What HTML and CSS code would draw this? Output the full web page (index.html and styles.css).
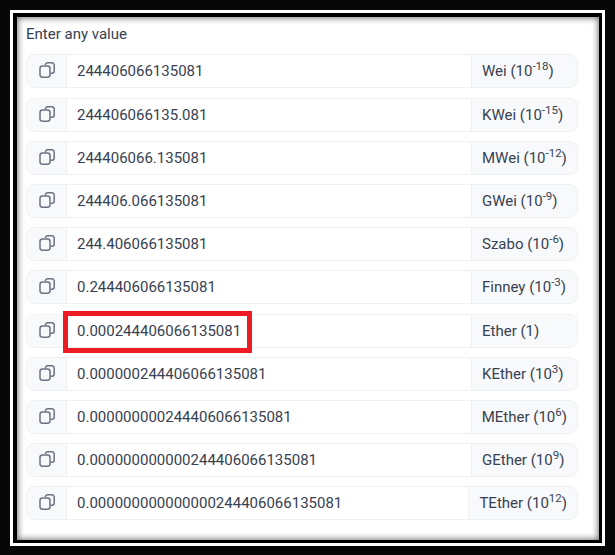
FILE: index.html
```html
<!DOCTYPE html>
<html lang="en">
<head>
<meta charset="utf-8">
<title>Ethereum unit converter</title>
<link rel="stylesheet" href="styles.css">
</head>
<body>
<svg class="defs" width="0" height="0" aria-hidden="true"><symbol id="copy" viewBox="0 0 16 16"><path d="M6.4 3.2V3a2.2 2.2 0 0 1 2.2-2.2h4.4A2.2 2.2 0 0 1 15.200 3v6a2.200 2.200 0 0 1-2.200 2.200h-1.500" fill="none" stroke="currentColor" stroke-width="1.500"/><rect x="1" y="4" width="10" height="11.200" rx="2.400" fill="none" stroke="currentColor" stroke-width="1.500"/></symbol></svg>
<div class="frame"><div class="frame-line"><div class="frame-inner"><main class="panel">
<label class="title">Enter any value</label>
<div class="rows">
<div class="row"><span class="copy"><svg class="icon"><use href="#copy"/></svg></span><span class="value">244406066135081</span><span class="unit">Wei (10<sup>-18</sup>)</span></div>
<div class="row"><span class="copy"><svg class="icon"><use href="#copy"/></svg></span><span class="value">244406066135.081</span><span class="unit">KWei (10<sup>-15</sup>)</span></div>
<div class="row"><span class="copy"><svg class="icon"><use href="#copy"/></svg></span><span class="value">244406066.135081</span><span class="unit">MWei (10<sup>-12</sup>)</span></div>
<div class="row"><span class="copy"><svg class="icon"><use href="#copy"/></svg></span><span class="value">244406.066135081</span><span class="unit">GWei (10<sup>-9</sup>)</span></div>
<div class="row"><span class="copy"><svg class="icon"><use href="#copy"/></svg></span><span class="value">244.406066135081</span><span class="unit">Szabo (10<sup>-6</sup>)</span></div>
<div class="row"><span class="copy"><svg class="icon"><use href="#copy"/></svg></span><span class="value">0.244406066135081</span><span class="unit">Finney (10<sup>-3</sup>)</span></div>
<div class="row"><span class="copy"><svg class="icon"><use href="#copy"/></svg></span><span class="value">0.000244406066135081<i class="mark"></i></span><span class="unit">Ether (1)</span></div>
<div class="row"><span class="copy"><svg class="icon"><use href="#copy"/></svg></span><span class="value">0.000000244406066135081</span><span class="unit">KEther (10<sup>3</sup>)</span></div>
<div class="row"><span class="copy"><svg class="icon"><use href="#copy"/></svg></span><span class="value">0.000000000244406066135081</span><span class="unit">MEther (10<sup>6</sup>)</span></div>
<div class="row"><span class="copy"><svg class="icon"><use href="#copy"/></svg></span><span class="value">0.000000000000244406066135081</span><span class="unit">GEther (10<sup>9</sup>)</span></div>
<div class="row"><span class="copy"><svg class="icon"><use href="#copy"/></svg></span><span class="value">0.000000000000000244406066135081</span><span class="unit">TEther (10<sup>12</sup>)</span></div>
</div>
</main></div></div></div>
</body>
</html>
```
FILE: styles.css
```css
* { box-sizing: border-box; }
html, body { margin: 0; height: 100%; background: #000; }
.defs { position: absolute; }
.frame { width: 615px; height: 555px; padding: 10px 10px 9px 10px; background: #060606; }
.frame-line { height: 100%; padding: 3px; background: #fff; }
.frame-inner { height: 100%; padding: 4px 3px 3px 4px; background: #000; }
.panel {
  height: 100%;
  padding: 8px 21px 0 9px;
  background: #fff;
  box-shadow: inset 0 0 6px 1px rgba(0,0,0,.55);
  font-family: Roboto, "Liberation Sans", sans-serif;
  font-size: 15px;
  color: #374151;
}
.title { display: block; height: 29.4px; line-height: 19px; color: #374151; }
.rows { display: flex; flex-direction: column; gap: 9.2px; }
.row {
  display: flex;
  height: 34px;
  border: 1px solid #eef0f4;
  border-radius: 8px;
  overflow: hidden;
  background: #fff;
}
.copy {
  flex: none;
  width: 40px;
  display: flex;
  align-items: center;
  justify-content: center;
  background: #f8f9fb;
  border-right: 1px solid #eef0f4;
  color: #6b7280;
}
.icon { width: 16px; height: 16px; position: relative; top: -1px; }
.value { flex: 1; position: relative; padding-left: 10px; line-height: 32px; white-space: nowrap; }
.unit {
  flex: none;
  min-width: 106px;
  padding: 0 10px;
  line-height: 32px;
  white-space: nowrap;
  background: #f8f9fb;
  border-left: 1px solid #eef0f4;
}
sup { font-size: 11.5px; line-height: 0; vertical-align: 6px; }
.mark {
  position: absolute;
  left: -4px;
  top: -4px;
  width: 189px;
  height: 42px;
  border: 5px solid #ed1c24;
}
.row:has(.mark) { overflow: visible; }
```
